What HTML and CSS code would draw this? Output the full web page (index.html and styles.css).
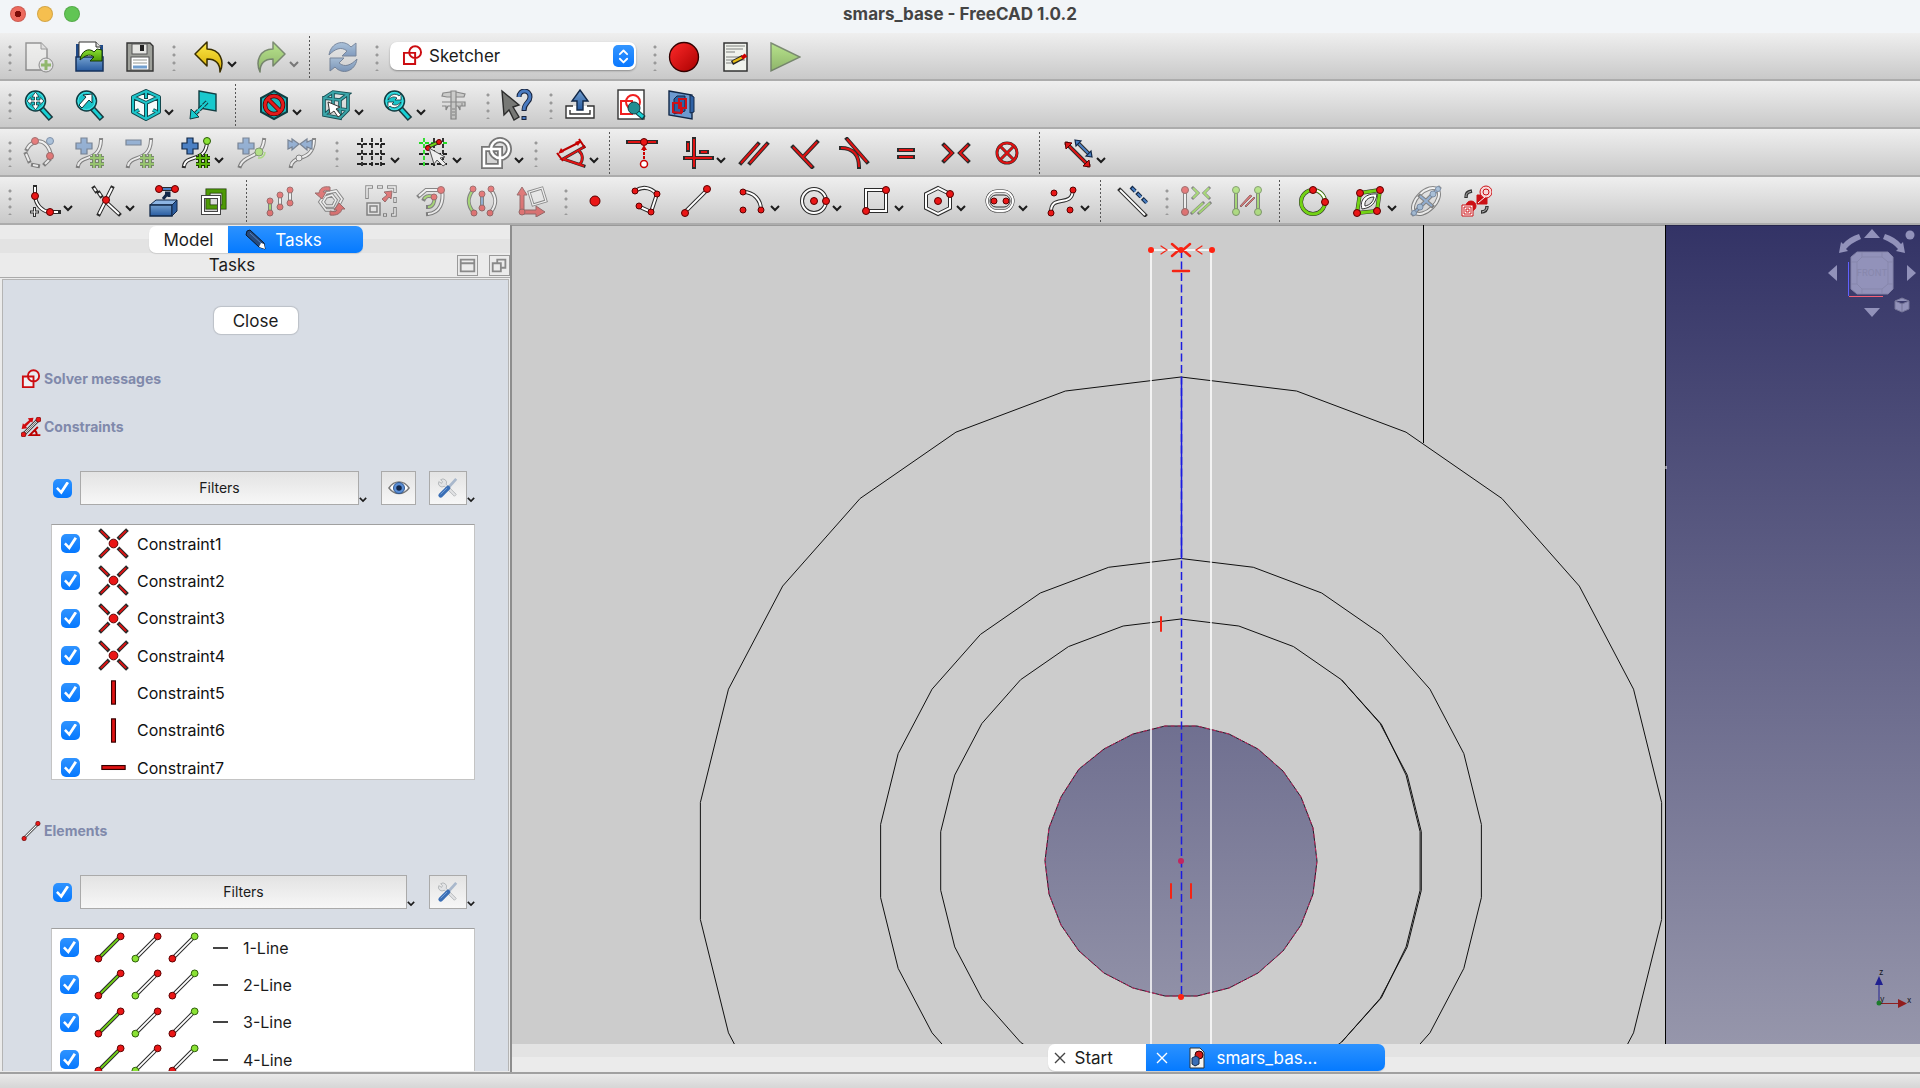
FILE: index.html
```html
<!DOCTYPE html>
<html lang="en">
<head>
<meta charset="utf-8">
<title>smars_base - FreeCAD 1.0.2</title>
<link rel="stylesheet" href="styles.css">
</head>
<body>
<svg class="defs" aria-hidden="true">
  <defs>
    <linearGradient id="yellow" x1="0" y1="0" x2="0" y2="1"><stop offset="0" stop-color="#fdea4a"/><stop offset="1" stop-color="#d5aa00"/></linearGradient>
    <linearGradient id="green" x1="0" y1="0" x2="0" y2="1"><stop offset="0" stop-color="#8ae234"/><stop offset="1" stop-color="#4e9a06"/></linearGradient>
    <linearGradient id="blue" x1="0" y1="0" x2="0" y2="1"><stop offset="0" stop-color="#729fcf"/><stop offset="1" stop-color="#285ba0"/></linearGradient>
    <linearGradient id="red" x1="0" y1="0" x2="1" y2="1"><stop offset="0" stop-color="#ff2a2a"/><stop offset="1" stop-color="#a90000"/></linearGradient>
    <linearGradient id="sky" gradientUnits="userSpaceOnUse" x1="0" y1="225" x2="0" y2="1044"><stop offset="0" stop-color="#333366"/><stop offset="1" stop-color="#9696ab"/></linearGradient>
    <symbol id="lens" viewBox="0 0 32 32">
      <path d="M18 19 28 30" stroke="#1b3b40" stroke-width="6"/><path d="M18 19 27 29" stroke="#18d0d4" stroke-width="3"/>
      <circle cx="12.500" cy="12" r="10" fill="#19c3c8" stroke="#123d42" stroke-width="1.500"/><circle cx="12.500" cy="12" r="8.500" fill="none" stroke="#47e6e9"/>
    </symbol>
    <symbol id="sketcher" viewBox="0 0 32 32">
      <rect x="3" y="12" width="17" height="17" fill="#fff" fill-opacity=".6"/><circle cx="20" cy="11" r="9" fill="#fff" fill-opacity=".4"/>
      <path d="M3 12H20V29H3Z M20 2a9 9 0 1 1 0 18a9 9 0 1 1 0-18Z" fill="none" stroke="#cc0c10" stroke-width="3"/>
    </symbol>
    <symbol id="coincident" viewBox="0 0 32 32">
      <path class="o" d="M3 3 10 10M29 3 22 10M3 29 10 22M29 29 22 22"/><path class="r" d="M3 3 10 10M29 3 22 10M3 29 10 22M29 29 22 22"/><circle class="d" cx="16" cy="16" r="4.500"/>
    </symbol>
    <symbol id="vertical" viewBox="0 0 32 32"><rect x="14" y="4" width="4" height="24" fill="#e01212" stroke="#300" stroke-width="1.200"/></symbol>
    <symbol id="horizontal" viewBox="0 0 32 32"><rect x="4" y="14" width="24" height="4" fill="#e01212" stroke="#300" stroke-width="1.200"/></symbol>
    <symbol id="edge" viewBox="0 0 32 32"><path class="o" d="M5 27 27 5"/><path class="g" d="M5 27 27 5"/><circle class="d" cx="4.500" cy="27.500" r="3.500"/><circle class="d" cx="27.500" cy="4.500" r="3.500"/></symbol>
    <symbol id="startpoint" viewBox="0 0 32 32"><path class="o" d="M5 27 27 5"/><path class="w" d="M5 27 27 5"/><circle class="gd" cx="4.500" cy="27.500" r="3.500"/><circle class="d" cx="27.500" cy="4.500" r="3.500"/></symbol>
    <symbol id="endpoint" viewBox="0 0 32 32"><path class="o" d="M5 27 27 5"/><path class="w" d="M5 27 27 5"/><circle class="d" cx="4.500" cy="27.500" r="3.500"/><circle class="gd" cx="27.500" cy="4.500" r="3.500"/></symbol>
    <symbol id="line" viewBox="0 0 32 32"><path class="o" d="M5 27 27 5"/><path class="w" d="M5 27 27 5"/><circle class="d" cx="5" cy="28" r="3.500"/><circle class="d" cx="27" cy="4" r="3.500"/></symbol>
    <symbol id="wrench" viewBox="0 0 24 24">
      <path d="M4 3a4 4 0 0 1 6 5L21 19l-2 2L8 10A4 4 0 0 1 2 5l3 2 1-2z" fill="#e2e3e5" stroke="#a5a8ac" stroke-width=".8"/>
      <path d="M21 2 12 12" stroke="#a9b8cc" stroke-width="3"/><path d="M12 12 4 20" stroke="#3a6eb5" stroke-width="5" stroke-linecap="round"/><path d="M11 12 4 19" stroke="#7ba5dc" stroke-width="1"/>
    </symbol>
    <symbol id="caret" viewBox="0 0 10 8"><path d="M1 2 5 6 9 2" fill="none" stroke="#1c1c1c" stroke-width="2"/></symbol>
    <path id="ring" class="ring" d="M0-1000 239-971 465-886 663-749 823-568 935-355 993-121 993 121 935 355 823 568 663 749 465 886 239 971 0 1000-239 971-465 886-663 749-823 568-935 355-993 121-993-121-935-355-823-568-663-749-465-886-239-971Z"/>
  </defs>
</svg>

<header class="titlebar">
  <div class="lights"><span class="light close"></span><span class="light min"></span><span class="light max"></span></div>
  <h1>smars_base - FreeCAD 1.0.2</h1>
</header>

<div class="toolbar">
  <div class="group"><span class="handle"></span>
    <button class="tool off" aria-label="New"><svg viewBox="0 0 32 32"><path d="M3 2H18L24 8V29H3Z" fill="#f7f7f5" stroke="#444" stroke-width="1.400"/><path d="M18 2V8H24" fill="#ddd" stroke="#555"/><circle cx="23" cy="24" r="7" fill="#eee" stroke="#444"/><path d="M23 19V29M18 24H28" stroke="#4e9a06" stroke-width="3"/></svg></button>
    <button class="tool" aria-label="Open"><svg viewBox="0 0 32 32"><path d="M2 3H6V28H2Z" fill="#204a87"/><path d="M5 1H22L27 6V22H5Z" fill="#fff" stroke="#333"/><path d="M26 4H29V22H26Z" fill="#204a87"/><path d="M22 1V6H27" fill="#ddd" stroke="#333"/><path d="M2 16H29V30H2Z" fill="url(#blue)" stroke="#16325c" stroke-width="1.500"/><path d="M6 19C7 10 15 6 20 11L23 8 28 9V20L16 20 20 16C15 12 11 15 6 19Z" fill="url(#green)" stroke="#173605"/></svg></button>
    <button class="tool" aria-label="Save"><svg viewBox="0 0 32 32"><path d="M3 2H26L29 5V30H3Z" fill="#9fa19b" stroke="#333" stroke-width="1.400"/><rect x="8" y="3" width="15" height="10" fill="#e6e6e3" stroke="#555"/><rect x="16" y="4" width="4" height="6" fill="#222"/><rect x="7" y="16" width="18" height="13" fill="#fff" stroke="#555"/><path d="M9 19H23M9 22H23" stroke="#b9bab6" stroke-width="1.500"/><path d="M9 26H23" stroke="#729fcf" stroke-width="3"/></svg></button>
  </div>
  <div class="group"><span class="handle"></span>
    <button class="tool more" aria-label="Undo"><svg viewBox="0 0 32 32"><path d="M2 13 14 1V8C27 8 32 20 27 31 27 22 23 18 14 18V25Z" fill="url(#yellow)" stroke="#3a2f00" stroke-width="1.500" stroke-linejoin="round"/></svg><svg class="caret"><use href="#caret"/></svg></button>
    <button class="tool more off" aria-label="Redo"><svg viewBox="0 0 32 32"><path d="M30 13 18 1V8C5 8 0 20 5 31 5 22 9 18 18 18V25Z" fill="url(#green)" stroke="#173605" stroke-width="1.500" stroke-linejoin="round"/></svg><svg class="caret"><use href="#caret"/></svg></button>
    <span class="sep"></span>
    <button class="tool off" aria-label="Refresh"><svg viewBox="0 0 32 32"><path d="M2 14C4 1 17-2 24 6L29 2V15H15L20 10C14 5 8 8 2 14Z" fill="url(#blue)" stroke="#16325c"/><path d="M30 18C28 31 15 34 8 26L3 30V17H17L12 22C18 27 24 24 30 18Z" fill="url(#blue)" stroke="#16325c"/></svg></button>
  </div>
  <div class="group"><span class="handle"></span>
    <div class="workbench">
      <svg class="wb-icon"><use href="#sketcher"/></svg>
      <select aria-label="Workbench"><option>Sketcher</option></select>
      <span class="stepper"><svg viewBox="0 0 20 24"><path d="M6 10 10 6 14 10M6 15 10 19 14 15" fill="none" stroke="#fff" stroke-width="2" stroke-linecap="round" stroke-linejoin="round"/></svg></span>
    </div>
  </div>
  <div class="group"><span class="handle"></span>
    <button class="tool" aria-label="Record macro"><svg viewBox="0 0 32 32"><circle cx="16" cy="16" r="14.500" fill="url(#red)" stroke="#300" stroke-width="1.300"/></svg></button>
    <button class="tool" aria-label="Macros"><svg viewBox="0 0 32 32"><rect x="5" y="2" width="23" height="28" fill="#f0f2ec" stroke="#333" stroke-width="1.500"/><path d="M7 5H26M7 8H24M7 11H16M7 16H26M7 19H26M7 22H16" stroke="#a4a6a2" stroke-width="1.300"/><path d="M13 22 24 16" stroke="#222" stroke-width="4.500"/><path d="M14 21 24 16" stroke="#e8bd12" stroke-width="2.500"/><path d="M23 17 27 14" stroke="#c00" stroke-width="4"/></svg></button>
    <button class="tool off" aria-label="Run macro"><svg viewBox="0 0 32 32"><path d="M2 2 31 16 2 30Z" fill="url(#green)" stroke="#173605" stroke-width="1.400"/></svg></button>
  </div>
</div>

<div class="toolbar">
  <div class="group"><span class="handle"></span>
    <button class="tool" aria-label="Fit all"><svg viewBox="0 0 32 32"><use href="#lens"/><path d="M12.500 3 16 8 13.500 8V11H17V8.500L21 12 17 15.500V13H13.500V16H16L12.500 21 9 16H11.500V13H8V15.500L4 12 8 8.500V11H11.500V8H9Z" fill="#fff" stroke="#153438" stroke-width=".8"/></svg></button>
    <button class="tool" aria-label="Fit selection"><svg viewBox="0 0 32 32"><use href="#lens"/><path d="M18 5V14L15 11 8 19 5 16 12 8 9 6Z" fill="#fff" stroke="#153438"/></svg></button>
    <button class="tool more" aria-label="Standard views"><svg viewBox="0 0 32 32"><path d="M16 2 29 8V23L16 30 3 23V8Z" fill="#f4fbfb"/><path d="M16 2 29 8V23L16 30 3 23V8ZM3 8 16 14 29 8M16 14V30M16 2V10M9 21 5 23M23 21 27 23" fill="none" stroke="#12484d" stroke-width="4" stroke-linejoin="round"/><path d="M16 2 29 8V23L16 30 3 23V8ZM3 8 16 14 29 8M16 14V30M16 3V9M9 21 5 23M23 21 27 23" fill="none" stroke="#1cc5ca" stroke-width="2"/></svg><svg class="caret"><use href="#caret"/></svg></button>
    <button class="tool" aria-label="Align to selection"><svg viewBox="0 0 32 32"><path d="M12 2 29 5V22L12 19Z" fill="#18c9cd" stroke="#123d42" stroke-width="1.400"/><path d="M20 13 8 25" stroke="#123d42" stroke-width="4" stroke-dasharray="5 1"/><path d="M20 13 8 25" stroke="#19d0d4" stroke-width="2"/><path d="M4 20 3 30 12 28Z" fill="#18c9cd" stroke="#123d42"/></svg></button>
    <span class="sep"></span>
    <button class="tool more" aria-label="Draw style"><svg viewBox="0 0 32 32"><path d="M16 2 29 9V23L16 30 3 23V9Z" fill="#19b6bb" stroke="#0e3e42" stroke-width="2"/><circle cx="16" cy="16" r="9" fill="none" stroke="#4c0000" stroke-width="4.500"/><path d="M10 10 22 22" stroke="#4c0000" stroke-width="4.500"/><circle cx="16" cy="16" r="9" fill="none" stroke="#e31b1b" stroke-width="3"/><path d="M10 10 22 22" stroke="#e31b1b" stroke-width="3"/></svg><svg class="caret"><use href="#caret"/></svg></button>
    <button class="tool more" aria-label="Bounding box"><svg viewBox="0 0 32 32"><path d="M4 9 20 11V29L4 26ZM4 9 13 3 28 5 20 11M28 5V21L20 29M13 3V19L4 26M13 19 28 21" fill="none" stroke="#144d52" stroke-width="3.600"/><path d="M4 9 20 11V29L4 26ZM4 9 13 3 28 5 20 11M28 5V21L20 29M13 3V19L4 26M13 19 28 21" fill="none" stroke="#3ba6aa" stroke-width="1.800"/><path d="M8 13 20 18 16 20 21 26 18 28 14 22 10 25Z" fill="#fff" stroke="#333"/></svg><svg class="caret"><use href="#caret"/></svg></button>
    <button class="tool more" aria-label="Sync view"><svg viewBox="0 0 32 32"><use href="#lens"/><path d="M6 11C8 5 14 4 17 7L19 5V11H13L15 9C12 7 9 8 6 11ZM19 13C17 19 11 20 8 17L6 19V13H12L10 15C13 17 16 16 19 13Z" fill="#fff" stroke="#153438" stroke-width=".8"/></svg><svg class="caret"><use href="#caret"/></svg></button>
    <button class="tool off" aria-label="Measure"><svg viewBox="0 0 32 32"><path d="M13 2H18V30H13ZM5 4 13 3V8H9L4 7ZM18 3 27 5 26 8H18ZM4 13H27V17H22V21L20 17H18V13ZM13 17H10L8 21V17H4" fill="#b4b5b2" stroke="#333" stroke-width="1.200"/><path d="M14 20H17M14 23H17M14 26H17M24 14V17" stroke="#333"/></svg></button>
  </div>
  <div class="group"><span class="handle"></span>
    <button class="tool" aria-label="What's this"><svg viewBox="0 0 32 32"><path d="M1 2 18 16 12 18 18 28 13 31 8 21 3 26Z" fill="#777875" stroke="#2c2c2c" stroke-width="1.400"/><path d="M18 8C18 0 29 0 29 8 29 14 23 13 23 22M23 27V31" fill="none" stroke="#17233c" stroke-width="5"/><path d="M18 8C18 0 29 0 29 8 29 14 23 13 23 21M23 28V30" fill="none" stroke="#4a7bc1" stroke-width="3"/></svg></button>
  </div>
  <div class="group"><span class="handle"></span>
    <button class="tool" aria-label="Leave sketch"><svg viewBox="0 0 32 32"><path d="M9 17H2V29H30V17H23M6 21V25H26V21" fill="#fff" stroke="#333" stroke-width="1.400"/><path d="M16 1 24 12H19V21H13V12H8Z" fill="url(#blue)" stroke="#122848" stroke-width="1.400"/></svg></button>
    <button class="tool" aria-label="View sketch"><svg viewBox="0 0 32 32"><rect x="3" y="1" width="26" height="29" fill="#fff" stroke="#333" stroke-width="1.400"/><path d="M6 12H17V25H6ZM18 6a7 7 0 1 1 0 14a7 7 0 1 1 0-14Z" fill="none" stroke="#f02020" stroke-width="2"/><path d="M22 23 29 29" stroke="#123d42" stroke-width="5"/><path d="M22 23 28 28" stroke="#18d0d4" stroke-width="3"/><circle cx="19" cy="19" r="6" fill="#238e92" stroke="#123d42"/></svg></button>
    <button class="tool" aria-label="View section"><svg viewBox="0 0 32 32"><path d="M4 2 27 6V30L4 26Z" fill="#6c9ad0" stroke="#122848" stroke-width="1.400"/><path d="M25 6 29 8V23L25 24ZM12 7H20V22L9 25V10Z" fill="#2f61a4" stroke="#122848"/><path d="M8 14H16V24L8 23ZM14 10H21V19H14ZM17 19V24" fill="none" stroke="#d01018" stroke-width="2"/></svg></button>
  </div>
</div>

<div class="toolbar">
  <div class="group"><span class="handle"></span>
    <button class="tool off" aria-label="Convert to B-spline"><svg viewBox="0 0 32 32"><path class="o" d="M12 5C20 2 27 9 28 20M4 12C6 8 7 7 10 6M3 17 6 24M10 28 15 29M22 27 26 23"/><path class="w" d="M12 5C20 2 27 9 28 20M4 12C6 8 7 7 10 6M3 17 6 24M10 28 15 29M22 27 26 23"/><circle class="d" cx="12" cy="4" r="3.500"/><circle class="bd" cx="27" cy="4" r="3.500"/><circle class="d" cx="27" cy="19" r="3.500"/></svg></button>
    <button class="tool off" aria-label="Increase degree"><svg viewBox="0 0 32 32"><path class="o" d="M4 29C6 17 26 26 27 3"/><path class="w" d="M4 29C6 17 26 26 27 3"/><path class="bp" d="M7 1H13V6H18V12H13V17H7V12H2V6H7Z"/><path class="hash" d="M20 17V31M26 17V31M16 21H30M16 27H30"/><path class="hashg" d="M20 17V31M26 17V31M16 21H30M16 27H30"/></svg></button>
    <button class="tool off" aria-label="Decrease degree"><svg viewBox="0 0 32 32"><path class="o" d="M4 29C6 17 26 26 27 3"/><path class="w" d="M4 29C6 17 26 26 27 3"/><path class="bp" d="M2 3H17V8H2Z"/><path class="hash" d="M20 17V31M26 17V31M16 21H30M16 27H30"/><path class="hashg" d="M20 17V31M26 17V31M16 21H30M16 27H30"/></svg></button>
    <button class="tool more" aria-label="Increase knot multiplicity"><svg viewBox="0 0 32 32"><path class="o" d="M4 29C6 17 26 26 27 5"/><path class="w" d="M4 29C6 17 26 26 27 5"/><path class="bp" d="M7 1H13V6H18V12H13V17H7V12H2V6H7Z"/><circle class="gd" cx="27" cy="4" r="3.500"/><path class="hash" d="M20 17V31M26 17V31M16 21H30M16 27H30"/><path class="hashg" d="M20 17V31M26 17V31M16 21H30M16 27H30"/></svg><svg class="caret"><use href="#caret"/></svg></button>
    <button class="tool off" aria-label="Insert knot"><svg viewBox="0 0 32 32"><path class="o" d="M4 29C8 17 26 22 28 3"/><path class="w" d="M4 29C8 17 26 22 28 3"/><path class="bp" d="M7 1H13V6H18V12H13V17H7V12H2V6H7Z"/><circle class="gd" cx="23" cy="15" r="4"/><path d="M29 15A6 6 0 0 1 22 21" fill="none" stroke="#7fd92c" stroke-width="1.500"/></svg></button>
    <button class="tool off" aria-label="Join curves"><svg viewBox="0 0 32 32"><path class="o" d="M4 29C6 17 26 26 27 3"/><path class="w" d="M4 29C6 17 26 26 27 3"/><path class="bp" d="M1 3 5 5V2L12 7 5 13V10L1 12ZM25 3 20 5V2L13 7 20 13V10L25 12Z"/><circle cx="12" cy="21" r="3" fill="#fff" stroke="#333"/></svg></button>
  </div>
  <div class="group"><span class="handle"></span>
    <button class="tool more" aria-label="Grid"><svg viewBox="0 0 32 32"><path d="M6 1V31M16 1V31M25 1V31M1 7H31M1 17H31M1 27H31" fill="none" stroke="#222" stroke-width="1.800" stroke-dasharray="4 2"/></svg><svg class="caret"><use href="#caret"/></svg></button>
    <button class="tool more" aria-label="Snap"><svg viewBox="0 0 32 32"><path d="M16 1V31M25 1V31M1 17H31M1 27H31" fill="none" stroke="#222" stroke-width="1.800" stroke-dasharray="4 2"/><path d="M6 1V31M1 6H31" fill="none" stroke="#22dd22" stroke-width="1.800" stroke-dasharray="4 2"/><path class="o" d="M10 10 21 5"/><path class="g" d="M10 10 21 5"/><circle class="d" cx="10" cy="11" r="2.500"/><circle class="d" cx="21" cy="5" r="2.500"/><path d="M11 11 27 20 22 21 28 27 25 29 19 23 16 27Z" fill="#eee" stroke="#555"/></svg><svg class="caret"><use href="#caret"/></svg></button>
    <button class="tool more" aria-label="Rendering order"><svg viewBox="0 0 32 32"><path d="M4 12H20V29H4ZM20 3a9 9 0 1 1 0 18a9 9 0 1 1 0-18Z" fill="none" stroke="#777" stroke-width="6"/><path d="M4 12H20V29H4ZM20 3a9 9 0 1 1 0 18a9 9 0 1 1 0-18Z" fill="none" stroke="#fff" stroke-width="2.500"/></svg><svg class="caret"><use href="#caret"/></svg></button>
  </div>
  <div class="group"><span class="handle"></span>
    <button class="tool more" aria-label="Dimension"><svg viewBox="0 0 32 32"><path class="o thin" d="M29 10 8 22 29 29M24 14A9 9 0 0 1 25 27"/><path class="r" d="M29 10 8 22 29 29M24 14A9 9 0 0 1 25 27"/><path d="M2 16 8 24M24 2 30 11M5 15 25 5" fill="none" stroke="#b00" stroke-width="2"/><path d="M3 17 6 11 9 15ZM26 3 20 5 23 9Z" fill="#c00"/></svg><svg class="caret"><use href="#caret"/></svg></button>
    <span class="sep"></span>
    <button class="tool" aria-label="Coincident"><svg viewBox="0 0 32 32"><path class="o" d="M2 5H30"/><path class="r" d="M2 5H30"/><circle class="d" cx="18" cy="5" r="3.500"/><path d="M18 11V22" stroke="#c00" stroke-width="2" stroke-dasharray="3 1"/><path d="M15 13 18 8 21 13Z" fill="#c00"/><circle cx="18" cy="27" r="3.500" fill="#fff" stroke="#c00" stroke-width="1.500"/></svg></button>
    <button class="tool more" aria-label="Horizontal/vertical"><svg viewBox="0 0 32 32"><path class="o" d="M12 2V30M3 21H30M6 6V13M19 15H25"/><path class="r" d="M12 2V30M3 21H30M6 6V13M19 15H25"/></svg><svg class="caret"><use href="#caret"/></svg></button>
    <button class="tool" aria-label="Parallel"><svg viewBox="0 0 32 32"><path class="o" d="M3 26 20 7M12 26 29 7"/><path class="r" d="M3 26 20 7M12 26 29 7"/></svg></button>
    <button class="tool" aria-label="Perpendicular"><svg viewBox="0 0 32 32"><path class="o" d="M4 10 23 30M14 20 28 5"/><path class="r" d="M4 10 23 30M14 20 28 5"/></svg></button>
    <button class="tool" aria-label="Tangent"><svg viewBox="0 0 32 32"><path class="o" d="M8 2 28 25M2 11C14 11 20 18 20 30"/><path class="r" d="M8 2 28 25M2 11C14 11 20 18 20 30"/></svg></button>
    <button class="tool" aria-label="Equal"><svg viewBox="0 0 32 32"><path class="o" d="M9 13H23M9 20H23"/><path class="r" d="M9 13H23M9 20H23"/></svg></button>
    <button class="tool" aria-label="Symmetric"><svg viewBox="0 0 32 32"><path class="o" d="M4 8 12 16 4 24M28 8 20 16 28 24"/><path class="r" d="M4 8 12 16 4 24M28 8 20 16 28 24"/></svg></button>
    <button class="tool" aria-label="Block"><svg viewBox="0 0 32 32"><path class="o thin" d="M16 6a10 10 0 1 1 0 20a10 10 0 1 1 0-20ZM10 10 22 22M22 10 10 22"/><path class="r" d="M16 6a10 10 0 1 1 0 20a10 10 0 1 1 0-20ZM10 10 22 22M22 10 10 22"/></svg></button>
    <span class="sep"></span>
    <button class="tool more" aria-label="Toggle driving constraint"><svg viewBox="0 0 32 32"><path class="o" d="M5 7 26 28"/><path class="r" d="M5 7 26 28"/><path class="red" d="M3 5 10 6 4 12ZM28 30 21 29 27 23Z"/><path class="o" d="M16 6 27 17"/><path class="b" d="M16 6 27 17"/><path class="bp" d="M13 3 19 4 14 9ZM30 20 24 19 29 14Z"/></svg><svg class="caret"><use href="#caret"/></svg></button>
  </div>
</div>

<div class="toolbar">
  <div class="group"><span class="handle"></span>
    <button class="tool more" aria-label="Fillet"><svg viewBox="0 0 32 32"><path class="o" d="M6 1V11C7 20 13 26 20 27H30"/><path class="w" d="M6 2V11C7 20 13 26 20 27H29"/><path d="M5.500 22V32M1 27H10" stroke="#333" stroke-width="3"/><path d="M5.500 23V31M2 27H9" stroke="#eee"/><circle class="d" cx="6" cy="11" r="3.500"/><circle class="d" cx="21" cy="27" r="3.500"/></svg><svg class="caret"><use href="#caret"/></svg></button>
    <button class="tool more" aria-label="Trim"><svg viewBox="0 0 32 32"><path class="o" d="M8 29 21 3M15 17 28 29M3 3 5 6M8 8 10 11"/><path class="w" d="M8 29 21 3M15 17 28 29M3 3 5 6M8 8 10 11"/><circle class="d" cx="15" cy="15" r="3.500"/></svg><svg class="caret"><use href="#caret"/></svg></button>
    <button class="tool" aria-label="External geometry"><svg viewBox="0 0 32 32"><path d="M3 20 9 15H30L25 20Z" fill="#8db5e3" stroke="#122848"/><path d="M3 20H25V31H3Z" fill="url(#blue)" stroke="#122848" stroke-width="1.300"/><path d="M25 20 30 15V26L25 31Z" fill="#2c5c9d" stroke="#122848"/><path d="M16 14 21 8M18 8H22V12" fill="none" stroke="#122848" stroke-width="3"/><path class="o" d="M12 4H28"/><path class="b" d="M12 4H28"/><circle class="d" cx="12" cy="4" r="3.500"/><circle class="d" cx="28" cy="4" r="3.500"/></svg></button>
    <button class="tool" aria-label="Carbon copy"><svg viewBox="0 0 32 32"><path d="M10 6H26V22H10Z" fill="none" stroke="#1d3a05" stroke-width="5"/><path d="M10 6H26V22H10Z" fill="none" stroke="#4e9a06" stroke-width="3.500"/><path d="M5 12H21V28H5Z" fill="none" stroke="#444" stroke-width="4"/><path d="M5 12H21V28H5Z" fill="none" stroke="#fff" stroke-width="2"/></svg></button>
    <span class="sep"></span>
    <button class="tool off" aria-label="Move"><svg viewBox="0 0 32 32"><path class="o" d="M6 16V27M16 10V21M26 5V17"/><path class="w" d="M16 10V21M26 5V17"/><path class="g" d="M6 16V27"/><circle class="d" cx="6" cy="16" r="3"/><circle class="d" cx="6" cy="28" r="3"/><circle class="d" cx="16" cy="10" r="3"/><circle class="d" cx="16" cy="22" r="3"/><circle class="d" cx="26" cy="5" r="3"/><circle class="d" cx="26" cy="18" r="3"/></svg></button>
    <button class="tool off" aria-label="Rotate"><svg viewBox="0 0 32 32"><path d="M12 8 22 6 28 14 22 25 12 25 6 17ZM12 12 18 10 22 15 19 21 12 21 9 17Z" fill="none" stroke="#333" stroke-width="3.500"/><path d="M12 8 22 6 28 14 22 25 12 25 6 17ZM12 12 18 10 22 15 19 21 12 21 9 17Z" fill="none" stroke="#fff" stroke-width="1.600"/><path class="red" d="M16 2C9 1 6 3 5 8H1L8 14 12 7H9C10 5 12 5 16 6ZM16 30C23 31 27 28 28 24H31L25 18 20 25H23C22 27 20 27 16 26Z"/></svg></button>
    <button class="tool off" aria-label="Scale"><svg viewBox="0 0 32 32"><path d="M2 14V2H8M12 2H18M22 2H30V8M30 12V18M30 22V30H26M22 30H18" fill="none" stroke="#333" stroke-width="3.500"/><path d="M2 13V2H7M13 2H17M23 2H30V7M30 13V17M30 23V30H27M21 30H19" fill="none" stroke="#fff" stroke-width="1.500"/><path d="M2 18H15V30H2ZM5 21H12V27H5Z" fill="#eee" stroke="#333" stroke-width="1.500"/><path class="red" d="M17 14 22 10 19 7 27 6 26 14 24 12 20 17Z"/></svg></button>
    <button class="tool off" aria-label="Offset"><svg viewBox="0 0 32 32"><path class="o" d="M4 11 11 5H27C29 17 25 28 13 29M9 14C11 10 15 11 19 12C20 17 18 22 13 22"/><path class="w" d="M4 11 11 5H27C29 17 25 28 13 29"/><path class="g" d="M9 14C11 10 15 11 19 12C20 17 18 22 13 22"/><circle class="d" cx="26" cy="5" r="3.500"/><circle class="d" cx="19" cy="12" r="3"/></svg></button>
    <button class="tool off" aria-label="Mirror"><svg viewBox="0 0 32 32"><path class="o" d="M7 5C1 13 1 20 8 28M25 5C31 13 31 20 24 28M16 10V23"/><path class="g" d="M7 5C1 13 1 20 8 28"/><path class="w" d="M25 5C31 13 31 20 24 28"/><path class="b" d="M16 10V23"/><circle class="d" cx="7" cy="4" r="3"/><circle class="d" cx="8" cy="28" r="3"/><circle class="d" cx="25" cy="4" r="3"/><circle class="d" cx="24" cy="28" r="3"/><circle class="d" cx="16" cy="9" r="3"/><circle class="d" cx="16" cy="23" r="3"/></svg></button>
    <button class="tool off" aria-label="Remove axes alignment"><svg viewBox="0 0 32 32"><path d="M13 7 26 3 30 16 17 20Z" fill="#eee" stroke="#333" stroke-width="3"/><path d="M13 7 26 3 30 16 17 20Z" fill="none" stroke="#fff" stroke-width="1.300"/><path class="red" d="M4 26V10H1L6 2 11 10H8V25H20V21L29 27 20 32V29H4Z"/><circle class="d" cx="6" cy="27" r="3"/></svg></button>
  </div>
  <div class="group"><span class="handle"></span>
    <button class="tool" aria-label="Point"><svg viewBox="0 0 32 32"><circle class="d" cx="16" cy="16" r="5"/></svg></button>
    <button class="tool" aria-label="Polyline"><svg viewBox="0 0 32 32"><path class="o" d="M5 6C12 1 20 2 27 9L21 27 10 22"/><path class="w" d="M5 6C12 1 20 2 27 9L21 27 10 22"/><circle class="d" cx="5" cy="6" r="3"/><circle class="d" cx="27" cy="9" r="3"/><circle class="d" cx="21" cy="27" r="3"/><circle class="d" cx="9" cy="21" r="3"/></svg></button>
    <button class="tool" aria-label="Line"><svg viewBox="0 0 32 32"><use href="#line"/></svg></button>
    <button class="tool more" aria-label="Arc"><svg viewBox="0 0 32 32"><path class="o" d="M7 7C18 7 25 15 25 25"/><path class="w" d="M7 7C18 7 25 15 25 25"/><circle class="d" cx="7" cy="7" r="3"/><circle class="d" cx="25" cy="25" r="3"/><circle class="d" cx="7" cy="25" r="3"/></svg><svg class="caret"><use href="#caret"/></svg></button>
    <button class="tool more" aria-label="Circle"><svg viewBox="0 0 32 32"><circle class="o" cx="16" cy="16" r="12"/><circle class="w" cx="16" cy="16" r="12"/><circle class="d" cx="16" cy="16" r="3.500"/><circle class="d" cx="28" cy="16" r="3.500"/></svg><svg class="caret"><use href="#caret"/></svg></button>
    <button class="tool more" aria-label="Rectangle"><svg viewBox="0 0 32 32"><path class="o" d="M6 5H26V26H6Z"/><path class="w" d="M6 5H26V26H6Z"/><circle class="d" cx="26" cy="5" r="3.500"/><circle class="d" cx="6" cy="26" r="3.500"/></svg><svg class="caret"><use href="#caret"/></svg></button>
    <button class="tool more" aria-label="Polygon"><svg viewBox="0 0 32 32"><path class="o" d="M16 3 28 9V23L16 29 4 23V9Z"/><path class="w" d="M16 3 28 9V23L16 29 4 23V9Z"/><circle class="d" cx="16" cy="16" r="3.500"/><circle class="d" cx="28" cy="9" r="3.500"/></svg><svg class="caret"><use href="#caret"/></svg></button>
    <button class="tool more" aria-label="Slot"><svg viewBox="0 0 32 32"><rect class="o thin" x="3" y="6" width="26" height="20" rx="10"/><rect class="w" x="3" y="6" width="26" height="20" rx="10"/><rect x="6" y="10" width="20" height="12" rx="6" fill="#ddd" stroke="#333"/><circle class="d" cx="10" cy="16" r="3"/><circle class="d" cx="22" cy="16" r="3"/></svg><svg class="caret"><use href="#caret"/></svg></button>
    <button class="tool more" aria-label="B-spline"><svg viewBox="0 0 32 32"><path class="o" d="M5 28C4 8 26 24 27 5"/><path class="w" d="M5 28C4 8 26 24 27 5"/><circle class="d" cx="5" cy="28" r="3"/><circle class="d" cx="27" cy="5" r="3"/><circle class="d" cx="8" cy="8" r="3"/><circle class="d" cx="24" cy="25" r="3"/></svg><svg class="caret"><use href="#caret"/></svg></button>
    <span class="sep"></span>
    <button class="tool" aria-label="Toggle construction"><svg viewBox="0 0 32 32"><path class="o" d="M3 5 28 30"/><path class="w" d="M3 5 28 30"/><path d="M14 2 31 19" stroke="#122848" stroke-width="4" stroke-dasharray="6 2"/><path d="M15 3 31 19" class="b" stroke-dasharray="5 3"/></svg></button>
  </div>
  <div class="group"><span class="handle"></span>
    <button class="tool off" aria-label="Select constraints"><svg viewBox="0 0 32 32"><path class="o" d="M5 5V27"/><path class="o thin" d="M13 3 18 8 13 13M29 3 24 8 29 13M12 28 23 18M19 28 30 18"/><path class="w" d="M5 5V27"/><path class="g" d="M13 3 18 8 13 13M29 3 24 8 29 13M12 28 23 18M19 28 30 18"/><circle class="d" cx="5" cy="5" r="3.500"/><circle class="d" cx="5" cy="27" r="3.500"/></svg></button>
    <button class="tool off" aria-label="Select elements"><svg viewBox="0 0 32 32"><path class="o" d="M5 5V27M27 5V27"/><path class="g" d="M5 5V27M27 5V27"/><path class="red" d="M9 21 19 10 21 11 10 22ZM14 21 23 12 24 13 15 22Z"/><circle class="gd" cx="5" cy="5" r="3.500"/><circle class="gd" cx="5" cy="27" r="3.500"/><circle class="gd" cx="27" cy="5" r="3.500"/><circle class="gd" cx="27" cy="27" r="3.500"/></svg></button>
    <span class="sep"></span>
    <button class="tool" aria-label="Internal alignment"><svg viewBox="0 0 32 32"><circle class="o" cx="16" cy="17" r="12"/><circle class="g thick" cx="16" cy="17" r="12"/><path class="w" d="M16 5A12 12 0 0 1 28 17"/><circle class="d" cx="16" cy="5" r="3.500"/><circle class="d" cx="28" cy="17" r="3.500"/></svg></button>
    <button class="tool more" aria-label="B-spline polygon"><svg viewBox="0 0 32 32"><path class="o" d="M7 8 27 5 24 26 4 28Z"/><path class="g thick" d="M7 8 27 5 24 26 4 28Z"/><path d="M9 24C6 15 13 8 24 9 23 18 18 23 9 24Z" fill="#fff" stroke="#333"/><path d="M12 21C11 16 15 12 21 12 20 17 17 20 12 21Z" stroke="#333" fill="#ddd"/><circle class="d" cx="7" cy="8" r="3.500"/><circle class="d" cx="27" cy="5" r="3.500"/><circle class="d" cx="24" cy="26" r="3.500"/><circle class="d" cx="4" cy="28" r="3.500"/></svg><svg class="caret"><use href="#caret"/></svg></button>
    <button class="tool off" aria-label="Conic geometry"><svg viewBox="0 0 32 32"><ellipse class="o" cx="16" cy="16" rx="16" ry="9" transform="rotate(-45 16 16)"/><ellipse class="w" cx="16" cy="16" rx="16" ry="9" transform="rotate(-45 16 16)"/><path class="o" d="M3 29 29 3M10 11 22 21"/><path class="b" d="M3 29 29 3M10 11 22 21"/><circle class="bd" cx="4" cy="28" r="2.500"/><circle class="bd" cx="10" cy="22" r="3"/><circle class="bd" cx="23" cy="9" r="3"/><circle class="bd" cx="28" cy="4" r="2.500"/></svg></button>
    <button class="tool" aria-label="Switch virtual space"><svg viewBox="0 0 32 32"><g fill="none" stroke="#cc1015"><path d="M17 10H27V19H17Z" fill="#cc1015"/><circle cx="26" cy="7" r="6" fill="#f7dada"/><circle cx="26" cy="7" r="3"/><path d="M18 18 25 12" stroke="#fff"/><circle cx="11" cy="21" r="5" fill="#cc1015"/><path d="M2 20H13V31H2Z" fill="#fff"/><path d="M4 22H11V29H4ZM6 24H9V27H6Z"/></g><path d="M6 13C6 8 7 7 12 6M21 27C25 27 27 26 27 21" fill="none" stroke="#333" stroke-width="3.500"/><path d="M6 12C6 8 8 7 11 6.500M22 27C25 26 27 25 27 22" fill="none" stroke="#bbb"/></svg></button>
  </div>
</div>

<main class="workspace">
  <aside class="panel">
    <nav class="tabs panel-tabs">
      <button class="tab">Model</button>
      <button class="tab active"><svg viewBox="0 0 22 22"><path d="M2 2 5 1 19 14 20 20 14 18 1 6Z" fill="#274a7c" stroke="#0b1728"/><path d="M5 4 17 15" stroke="#5682bd"/><path d="M14 18 16 14 19 15 20 20Z" fill="#fff"/></svg>Tasks</button>
    </nav>
    <div class="dock-title"><h2>Tasks</h2>
      <button class="dock" aria-label="Collapse"><svg viewBox="0 0 21 21"><path d="M3 4H18V17H3ZM3 8H18"/></svg></button>
      <button class="dock" aria-label="Float"><svg viewBox="0 0 21 21"><path d="M3 8H12V17H3ZM8 8V4H17V13H12"/></svg></button>
    </div>
    <div class="tasks">
      <button class="push">Close</button>
      <h3 class="first"><svg><use href="#sketcher"/></svg>Solver messages</h3>
      <h3><svg viewBox="0 0 32 32"><path d="M5 27 27 5" stroke="#333" stroke-width="6"/><path d="M5 27 27 5" stroke="#fff" stroke-width="3"/><path d="M5 27 27 5" stroke="#333"/><path d="M1 19 3 10 5 12 13 5 11 2 20 1 18 9 16 7 8 15 10 18Z" fill="#d00c10"/><path d="M31 29H14L27 16M21 21A8 8 0 0 1 25 29" fill="none" stroke="#b00" stroke-width="3"/><circle class="d" cx="28" cy="4" r="4"/><circle class="d" cx="4" cy="28" r="4"/></svg>Constraints</h3>
      <div class="filters">
        <input type="checkbox" checked aria-label="Enable constraint filters">
        <button class="filter">Filters</button><svg class="drop"><use href="#caret"/></svg>
        <button class="square eye" aria-label="Show hidden"><svg viewBox="0 0 24 24"><path d="M1 12C7 3 17 3 23 12 17 20 7 20 1 12Z" fill="#fff" stroke="#777" stroke-width="1.500"/><circle cx="12" cy="12" r="6" fill="#5b8fd6" stroke="#284f87"/><circle cx="12" cy="12" r="3" fill="#14284a"/></svg></button>
        <button class="square" aria-label="Constraint settings"><svg><use href="#wrench"/></svg></button><svg class="drop"><use href="#caret"/></svg>
      </div>
      <ul class="list constraints">
        <li><label><input type="checkbox" checked><svg><use href="#coincident"/></svg>Constraint1</label></li>
        <li><label><input type="checkbox" checked><svg><use href="#coincident"/></svg>Constraint2</label></li>
        <li><label><input type="checkbox" checked><svg><use href="#coincident"/></svg>Constraint3</label></li>
        <li><label><input type="checkbox" checked><svg><use href="#coincident"/></svg>Constraint4</label></li>
        <li><label><input type="checkbox" checked><svg><use href="#vertical"/></svg>Constraint5</label></li>
        <li><label><input type="checkbox" checked><svg><use href="#vertical"/></svg>Constraint6</label></li>
        <li><label><input type="checkbox" checked><svg><use href="#horizontal"/></svg>Constraint7</label></li>
      </ul>
      <h3 class="elements-title"><svg><use href="#line"/></svg>Elements</h3>
      <div class="filters">
        <input type="checkbox" checked aria-label="Enable element filters">
        <button class="filter">Filters</button><svg class="drop"><use href="#caret"/></svg>
        <button class="square" aria-label="Element settings"><svg><use href="#wrench"/></svg></button><svg class="drop"><use href="#caret"/></svg>
      </div>
      <ul class="list elements">
        <li><label><input type="checkbox" checked><svg><use href="#edge"/></svg><svg><use href="#startpoint"/></svg><svg><use href="#endpoint"/></svg><span class="dash"></span>1-Line</label></li>
        <li><label><input type="checkbox" checked><svg><use href="#edge"/></svg><svg><use href="#startpoint"/></svg><svg><use href="#endpoint"/></svg><span class="dash"></span>2-Line</label></li>
        <li><label><input type="checkbox" checked><svg><use href="#edge"/></svg><svg><use href="#startpoint"/></svg><svg><use href="#endpoint"/></svg><span class="dash"></span>3-Line</label></li>
        <li><label><input type="checkbox" checked><svg><use href="#edge"/></svg><svg><use href="#startpoint"/></svg><svg><use href="#endpoint"/></svg><span class="dash"></span>4-Line</label></li>
      </ul>
    </div>
  </aside>

  <section class="document">
    <svg class="scene" viewBox="512 225 1408 819" preserveAspectRatio="xMidYMid slice" role="img" aria-label="Sketch view">
      <rect x="511" y="225" width="1410" height="819" fill="url(#sky)"/>
      <rect x="511" y="225" width="1154" height="819" fill="#ccc"/>
      <path d="M1665.500 225V1044" stroke="#000"/>
      <path d="M1666 466V469" stroke="#fff"/>
      <path d="M1423.500 225V443" stroke="#000"/>
      <path d="M511 225.500H1920" stroke="#000" stroke-opacity=".25"/>
      <g class="rings">
        <use href="#ring" transform="translate(1181 861) scale(.484)"/>
        <use href="#ring" transform="translate(1181 861) scale(.3025)"/>
        <use href="#ring" transform="translate(1181 861) scale(.242)"/>
        <path class="ring" d="M663-749 828-565 930-355 988-121 988 121 930 355 828 565 663 749" transform="translate(1181 861) scale(.242)"/>
      </g>
      <path d="M1045 861 1049 828 1061 797 1079 769 1104 749 1133 734 1165 726H1197L1229 734 1258 749 1283 771 1301 797 1313 828 1317 861 1313 894 1301 925 1283 951 1258 973 1229 988 1197 996H1165L1133 988 1104 973 1079 951 1061 925 1049 894Z" fill="url(#sky)" stroke="#1b1b26"/>
      <path d="M1045 861 1049 828 1061 797 1079 769 1104 749 1133 734 1165 726H1197L1229 734 1258 749 1283 771 1301 797 1313 828 1317 861 1313 894 1301 925 1283 951 1258 973 1229 988 1197 996H1165L1133 988 1104 973 1079 951 1061 925 1049 894Z" fill="none" stroke="#c2265f" stroke-dasharray="4 3"/>
      <path d="M1151 1044V250H1211V1044" fill="none" stroke="#fff" stroke-width="1.500"/>
      <path d="M1181.500 250V997" stroke="#1c1ce0" stroke-width="1.500" stroke-dasharray="8 3.500"/>
      <path d="M1181.500 377V559" stroke="#1c1ce0" stroke-width="1.500"/>
      <g class="marks">
        <path d="M1172 244 1179 250 1172 256M1190 244 1183 250 1190 256M1173 271H1189" stroke-width="2.500"/>
        <path d="M1161 246 1167 250 1161 254M1202 246 1196 250 1202 254" stroke-width="1.200"/>
        <path d="M1161 617V631M1171 884V898M1191 884V898" stroke-width="2"/>
      </g>
      <g fill="#f21"><circle cx="1151" cy="250" r="3"/><circle cx="1212" cy="250" r="3"/><circle cx="1181" cy="250" r="3"/><circle cx="1181" cy="997" r="3"/></g>
      <circle cx="1181" cy="861" r="3" fill="#c2265f"/>
      <g fill="#9292ba">
        <path d="M1872 229 1880 238H1864ZM1872 317 1880 308H1864ZM1828 273 1837 265V281ZM1916 273 1907 265V281Z"/>
        <circle cx="1910" cy="235" r="4.500"/>
        <path d="M1859 234 1861 239Q1851 243 1846 249L1848 251 1839 253 1841 242 1843 244Q1849 237 1859 234ZM1885 234 1883 239Q1893 243 1898 249L1896 251 1905 253 1903 242 1901 244Q1895 237 1885 234Z"/>
        <path d="M1857 252H1888L1893 257V289L1888 294H1857L1851 289V257Z" stroke="#8383a8"/>
        <path d="M1857 262 1862 257H1882L1888 262V284L1882 289H1862L1857 284ZM1862 252V257M1882 252V257M1862 289V294M1882 289V294M1851 262H1857M1888 262H1893M1851 284H1857M1888 284H1893" stroke="#8787ac"/>
        <path d="M1902 298 1909 301V309L1902 312 1895 309V301ZM1895 301 1902 304 1909 301M1902 304V312" stroke="#77779a"/>
      </g>
      <text class="face" x="1872" y="276" text-anchor="middle">FRONT</text>
      <path d="M1848.500 262V296" stroke="#6060ff"/><path d="M1849 296.500H1883" stroke="#f46078"/>
      <path d="M1879 1003V980" stroke="#23238f"/><path d="M1875 985 1879 976 1883 985Z" fill="#202090"/>
      <path d="M1879 1003.500H1902" stroke="#8e2020"/><path d="M1898 999 1907 1003.500 1898 1008Z" fill="#921c1c"/><circle cx="1879" cy="1003" r="2.500" fill="#1d7c2c"/>
      <g class="axis"><text x="1879" y="975">z</text><text x="1880" y="1002">y</text><text x="1907" y="1003">x</text></g>
    </svg>
    <nav class="tabs doc-tabs">
      <button class="tab"><svg viewBox="0 0 14 14"><path d="M2 2 12 12M12 2 2 12" stroke="#444" stroke-width="1.400"/></svg>Start</button>
      <button class="tab active"><svg viewBox="0 0 14 14"><path d="M2 2 12 12M12 2 2 12" stroke="#fff" stroke-width="1.400"/></svg><svg class="doc" viewBox="0 0 18 22"><path d="M2 1H12L16 5V21H2Z" fill="#f5f5f2" stroke="#333"/><circle cx="11" cy="8" r="4" fill="#d01818" stroke="#300"/><path d="M4 11 8 9 11 11V17L7 19 4 17Z" fill="#3a6eb5" stroke="#122848"/></svg>smars_bas...</button>
    </nav>
  </section>
</main>
<footer class="status"></footer>
</body>
</html>
```
FILE: styles.css
```css
* { box-sizing: border-box; }
body {
  margin: 0;
  height: 100vh;
  display: flex;
  flex-direction: column;
  overflow: hidden;
  background: #ebebeb;
  color: #1b1b1b;
  font: 16px/20px Inter, "Liberation Sans", sans-serif;
}
button { font: inherit; color: inherit; border: 0; padding: 0; background: none; }
h1, h2, h3, ul { margin: 0; padding: 0; font: inherit; list-style: none; }
.defs { position: absolute; width: 0; height: 0; }

/* Title bar */
.titlebar {
  flex: none;
  height: 33px;
  display: grid;
  grid-template-columns: 1fr auto 1fr;
  align-items: center;
  padding: 0 10px 5px;
  background: #f2f5f8;
}
.titlebar h1 { font-size: 17px; font-weight: 700; color: #444; }
.lights { display: flex; gap: 11px; }
.light { width: 16px; height: 16px; border-radius: 50%; border: 1px solid #0002; }
.close { background: radial-gradient(circle, #7c0c08 0 3px, #ed6a5e 3px); }
.min { background: #f5bf4f; }
.max { background: #61c554; }

/* Toolbars */
.toolbar {
  flex: none;
  height: 48px;
  display: flex;
  padding: 2px 0 0 1px;
  background: linear-gradient(#efefef, #c9c9c9);
  border-bottom: 2px solid #acacac;
}
.group { display: flex; align-items: center; }
.handle {
  width: 13px;
  height: 28px;
  background: radial-gradient(circle, #999 0 1px, #9990 2px) 6px 0 / 6px 8px repeat-y;
}
.sep {
  width: 15px;
  height: 42px;
  background: linear-gradient(#555 0 2px, #5550 2px) 7px 0 / 1px 4px repeat-y;
}
.tool { width: 51px; height: 32px; display: flex; justify-content: center; position: relative; }
.tool:nth-child(even) { width: 50px; }
.tool.more { width: 62px; }
.tool svg { width: 32px; height: 32px; }
.tool .caret { position: absolute; right: 3px; bottom: 5px; width: 10px; height: 8px; }
.off { opacity: .5; }
.workbench {
  width: 246px;
  height: 28px;
  margin: 0 10px 3px 9px;
  display: flex;
  align-items: center;
  gap: 6px;
  padding: 0 2px 0 12px;
  background: #fff;
  border-radius: 7px;
  box-shadow: 0 1px 2px #0005;
}
.wb-icon { width: 21px; height: 21px; }
.workbench select {
  flex: 1;
  appearance: none;
  border: 0;
  padding: 0;
  background: none;
  color: inherit;
  font: inherit;
  font-size: 17px;
}
.stepper {
  width: 21px;
  height: 22px;
  border-radius: 5px;
  background: linear-gradient(#3395ff, #0a78ff);
}
.stepper svg { width: 21px; height: 22px; }

/* Icon line work */
.o { fill: none; stroke: #2b2b2b; stroke-width: 4; stroke-linecap: square; }
.thin { stroke-width: 3; }
.w, .r, .g, .b { fill: none; stroke-width: 2; }
.w { stroke: #fff; }
.r { stroke: #e01212; }
.g { stroke: #73d216; }
.b { stroke: #4b80c4; }
.thick { stroke-width: 3; }
.d { fill: #ea1616; stroke: #5a0000; }
.gd { fill: #8ae234; stroke: #2b5a08; }
.bd { fill: #729fcf; stroke: #1c3f6e; }
.bp { fill: #4b80c4; stroke: #122848; stroke-width: 1.200; }
.red { fill: #dd1414; stroke: #500; }
.hash { fill: none; stroke: #1d3a05; stroke-width: 4; }
.hashg { fill: none; stroke: #5cb50c; stroke-width: 2; }

/* Tabs */
.tabs { display: flex; justify-content: center; height: 28px; background: linear-gradient(#ebebeb 14px, #e3e3e3 14px); }
.tab {
  display: flex;
  align-items: center;
  height: 27px;
  background: #fff;
  box-shadow: 0 1px 1px #0002;
  font-size: 17px;
}
.tab:first-child { border-radius: 7px 0 0 7px; }
.tab.active { color: #fff; background: linear-gradient(#2c92ff, #057aff); border-radius: 0 7px 7px 0; }
.tab svg { width: 14px; height: 14px; }

/* Task panel */
.workspace { flex: 1; min-height: 0; display: flex; }
.panel {
  width: 512px;
  flex: none;
  display: flex;
  flex-direction: column;
  border-right: 2px solid #8d8d8d;
}
.panel-tabs { padding: 1px 0 0 2px; }
.panel-tabs .tab { justify-content: center; width: 79px; }
.panel-tabs .active { width: 135px; gap: 8px; padding-right: 24px; }
.panel-tabs svg { width: 22px; height: 22px; }
.dock-title { display: flex; align-items: center; gap: 11px; height: 25px; flex: none; border-bottom: 1px solid #aaa; }
.dock-title h2 { flex: 1; text-align: center; font-size: 17px; padding-left: 18px; }
.dock { width: 21px; height: 21px; border: 1px solid #999; }
.dock svg { display: block; width: 19px; height: 19px; fill: none; stroke: #8a8a8a; stroke-width: 2; }
.tasks {
  flex: 1;
  min-height: 0;
  overflow: hidden;
  margin: 1px 1px 1px 2px;
  border: 1px solid #b4b4b4;
  border-bottom: 0;
  background: #d8dde5;
  display: flex;
  flex-direction: column;
}
.push {
  align-self: center;
  flex: none;
  width: 84px;
  height: 27px;
  margin: 27px 0 33px;
  border-radius: 7px;
  background: #fff;
  box-shadow: 0 0 1px 1px #0002;
  font-size: 17px;
}
.tasks h3 {
  display: flex;
  align-items: center;
  gap: 3px;
  flex: none;
  height: 24px;
  margin-bottom: 24px;
  padding-left: 18px;
  font-size: 14px;
  font-weight: 700;
  color: #8089ab;
}
.tasks h3 svg { width: 20px; height: 20px; }
.tasks h3.elements-title { margin: 39px 0 32px; }
.filters { display: flex; align-items: center; flex: none; height: 34px; padding: 0 33px 0 50px; margin: 8px 0 19px; }
.elements-title + .filters { margin-top: 0; }
.filter, .square {
  height: 34px;
  border: 1px solid #aaa;
  background: linear-gradient(#e3e3e3, #f7f7f7);
  font-size: 14px;
}
.filter { flex: 1; margin-left: 8px; }
.square { width: 38px; display: grid; place-items: center; }
.square.eye { width: 35px; margin-right: 13px; }
.square svg { width: 22px; height: 22px; }
.drop { width: 8px; height: 7px; align-self: flex-end; margin-bottom: 2px; }
.filter + .drop { margin-right: 14px; }
input[type="checkbox"] {
  appearance: none;
  flex: none;
  margin: 0;
  width: 19px;
  height: 19px;
  border-radius: 5px;
  background: linear-gradient(#2f93ff, #0578ff);
  display: grid;
  place-items: center;
}
input[type="checkbox"]::before {
  content: "";
  width: 13px;
  height: 13px;
  background: #fff;
  clip-path: polygon(0 56%, 14% 42%, 38% 68%, 82% 0, 100% 12%, 42% 100%);
}
.list { margin: 0 33px 0 48px; background: #fff; border: 1px solid #c4c4c4; border-top-color: #a0a0a0; overflow: hidden; flex: none; }
.list label { display: flex; align-items: center; height: 37px; }
.list li:nth-child(3n) label { height: 38px; }
.constraints { height: 256px; padding-left: 9px; color: #111; }
.constraints svg { width: 31px; height: 31px; margin: 0 8px 0 18px; }
.elements { flex: 1; padding-left: 8px; border-bottom: 0; }
.elements svg { width: 31px; height: 31px; margin-right: 6px; }
.elements input + svg { margin-left: 15px; }
.dash { width: 15px; height: 2px; margin: 0 15px 0 8px; background: #444; }

/* 3D view */
.document { flex: 1; min-width: 0; display: flex; flex-direction: column; }
.scene { flex: 1; min-height: 0; width: 100%; display: block; }
.rings { fill: none; stroke: #111; }
.ring { stroke-width: 1; vector-effect: non-scaling-stroke; }
.marks { fill: none; stroke: #f42414; stroke-linecap: round; }
.face { font-size: 9px; fill: #8080a3; opacity: .6; }
.axis { font-size: 8px; fill: #161620; }
.doc-tabs { background: linear-gradient(#e3e3e3 13px, #ebebeb 13px); }
.doc-tabs .tab { width: 98px; padding-left: 5px; gap: 8px; }
.doc-tabs .active { width: 239px; padding-left: 9px; gap: 8px; }
.doc-tabs .tab .doc { width: 18px; height: 22px; margin: 0 3px 0 11px; }
.status { flex: none; height: 16px; border-top: 2px solid #a0a0a0; background: linear-gradient(#e9e9e9, #d6d6d6); }
```
